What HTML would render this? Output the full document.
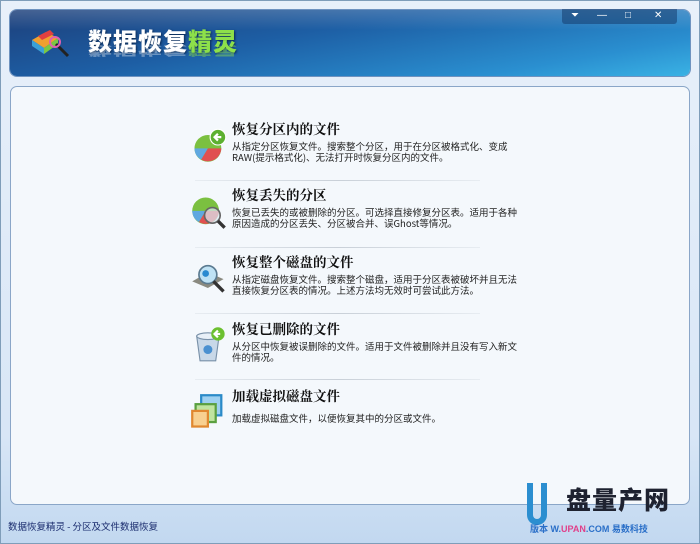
<!DOCTYPE html>
<html><head><meta charset="utf-8"><style>
*{margin:0;padding:0;box-sizing:border-box}
body{width:700px;height:544px;overflow:hidden;background:#cfe0f3;font-family:"Liberation Sans","Noto Sans CJK SC",sans-serif;position:relative}
.frame{position:absolute;left:0;top:0;width:700px;height:544px;border:1px solid #7f9db9;background:linear-gradient(#e8f0fa,#d8e6f6 80%,#c2d8f0)}
.banner{position:absolute;left:10px;top:10px;width:680px;height:66px;border-radius:7px;background:linear-gradient(170deg,#1d3f7a 0%,#1d5ea4 40%,#2a8fd0 80%,#3ab2e4 100%);box-shadow:0 0 0 1px #6f93c0}
.banner .gloss{position:absolute;left:0;top:0;right:0;height:20px;border-radius:7px 7px 0 0;background:linear-gradient(rgba(255,255,255,.18),rgba(255,255,255,0))}
.logo{position:absolute;left:78px;top:12px;font-size:24px;font-weight:900;color:#fff;letter-spacing:1px;text-shadow:1px 1px 2px #0b2850;font-family:"Noto Sans CJK SC",sans-serif}
.logo b{color:#8de04a}
.refl{position:absolute;left:78px;top:50px;font-size:24px;font-weight:900;color:rgba(255,255,255,.35);letter-spacing:1px;transform:scaleY(-.5);transform-origin:top;font-family:"Noto Sans CJK SC",sans-serif;line-height:34px}
.refl b{color:rgba(141,224,74,.45)}
.ctrl{position:absolute;left:562px;top:9px;width:115px;height:15px;background:rgba(20,60,110,.55);border-radius:0 0 3px 3px;color:#fff;font-size:10px}
.ctrl span{position:absolute;top:1px}
.panel{position:absolute;left:10px;top:86px;width:680px;height:419px;border:1px solid #8aa6c8;border-radius:7px;background:#f4f8fc}
.item{position:absolute;left:232px;width:290px}
.item h3{font-size:13.5px;font-weight:bold;color:#111;font-family:"Noto Serif CJK SC","Noto Sans CJK SC",serif;line-height:16px}
.item p{font-size:9.5px;color:#222;line-height:11px;margin-top:5px;font-family:"Noto Sans CJK SC",sans-serif}
.sep{position:absolute;left:195px;width:285px;height:1px;background:linear-gradient(90deg,rgba(180,190,200,.2),#c9d0d8,rgba(180,190,200,.2))}
.ic{position:absolute;left:190px;width:38px;height:38px}
.status{position:absolute;left:8px;top:519px;font-size:9.5px;color:#1a2c6e;font-family:"Noto Sans CJK SC",sans-serif}
.wm{position:absolute;left:566px;top:484px;font-size:25px;font-weight:900;color:#1e2230;font-family:"Noto Sans CJK SC",sans-serif;letter-spacing:1px;line-height:30px}
.u{position:absolute;left:527px;top:483px;width:20px;height:42px;border:6px solid #2b8ed0;border-top:none;border-radius:0 0 10px 10px}
.wm2{position:absolute;left:530px;top:522px;font-size:9px;color:#2a6fc8;font-weight:bold}
.wm2 i{color:#e0408a;font-style:normal}
</style></head><body>
<div class="frame"></div>
<div class="banner"><div class="gloss"></div>
<svg style="position:absolute;left:18px;top:16px" width="44" height="34" viewBox="0 0 44 34"><path d="M4 14 L18 6 L30 12 L16 22Z" fill="#f0a030"/><path d="M4 14 L16 22 L16 28 L4 20Z" fill="#3aa0d8"/><path d="M16 22 L30 12 L30 18 L16 28Z" fill="#7bc843"/><path d="M10 10 L22 4 L26 8 L14 14Z" fill="#e04040"/><line x1="28" y1="18" x2="40" y2="30" stroke="#222" stroke-width="3"/><circle cx="27" cy="16" r="5" fill="none" stroke="#e060b0" stroke-width="2"/></svg>
<div class="logo">数据恢复<b>精灵</b></div>
<div class="refl">数据恢复<b>精灵</b></div>
</div>
<div class="ctrl"><span style="left:9px">⏷</span><span style="left:35px">—</span><span style="left:63px">□</span><span style="left:92px">✕</span></div>
<div class="panel"></div>

<svg class="ic" style="top:126px" viewBox="0 0 34 34"><circle cx="16" cy="20" r="12" fill="#7bc040"/><path d="M16 20 L28 20 A12 12 0 0 1 10 30Z" fill="#e05050"/><path d="M16 20 L10 30 A12 12 0 0 1 4 20Z" fill="#60a8e0"/><circle cx="25" cy="10" r="7" fill="#5cb030" stroke="#fff"/><path d="M28 10 H22 M25 7 L22 10 L25 13" stroke="#fff" stroke-width="2" fill="none"/></svg>
<div class="item" style="top:120px"><h3>恢复分区内的文件</h3><p>从指定分区恢复文件。搜索整个分区，用于在分区被格式化、变成RAW(提示格式化)、无法打开时恢复分区内的文件。</p></div>
<div class="sep" style="top:180px"></div>

<svg class="ic" style="top:193px" viewBox="0 0 34 34"><circle cx="14" cy="16" r="12" fill="#7bc040"/><path d="M14 16 L26 16 A12 12 0 0 1 8 26Z" fill="#e05050"/><path d="M14 16 L8 26 A12 12 0 0 1 2 16Z" fill="#60a8e0"/><circle cx="20" cy="20" r="7" fill="rgba(220,235,245,.7)" stroke="#666" stroke-width="1.5"/><line x1="25" y1="25" x2="31" y2="31" stroke="#333" stroke-width="3"/></svg>
<div class="item" style="top:186px"><h3>恢复丢失的分区</h3><p>恢复已丢失的或被删除的分区。可选择直接修复分区表。适用于各种原因造成的分区丢失、分区被合并、误Ghost等情况。</p></div>
<div class="sep" style="top:247px"></div>

<svg class="ic" style="top:259px" viewBox="0 0 34 34"><path d="M2 20 L16 12 L30 18 L16 26Z" fill="#8a8a80"/><circle cx="16" cy="14" r="8" fill="#bfe2f4" stroke="#5a7a90" stroke-width="1.5"/><circle cx="14" cy="13" r="3" fill="#2a8ad0"/><line x1="21" y1="20" x2="30" y2="29" stroke="#333" stroke-width="3"/></svg>
<div class="item" style="top:253px"><h3>恢复整个磁盘的文件</h3><p>从指定磁盘恢复文件。搜索整个磁盘，适用于分区表被破坏并且无法直接恢复分区表的情况。上述方法均无效时可尝试此方法。</p></div>
<div class="sep" style="top:313px"></div>

<svg class="ic" style="top:325px" viewBox="0 0 34 34"><path d="M6 10 L26 10 L23 32 L9 32Z" fill="#c8d8e8" stroke="#7890a8"/><ellipse cx="16" cy="10" rx="10" ry="3" fill="#e8f0f8" stroke="#7890a8"/><circle cx="16" cy="22" r="4" fill="#4a90d0"/><circle cx="25" cy="8" r="6" fill="#6cc030"/><path d="M27 8 H22 M25 5 L22 8 L25 11" stroke="#fff" stroke-width="2" fill="none"/></svg>
<div class="item" style="top:320px"><h3>恢复已删除的文件</h3><p>从分区中恢复被误删除的文件。适用于文件被删除并且没有写入新文件的情况。</p></div>
<div class="sep" style="top:379px"></div>

<svg class="ic" style="top:393px" viewBox="0 0 34 34"><rect x="10" y="2" width="18" height="18" fill="#9ed0f0" stroke="#2a8ac8" stroke-width="2"/><rect x="5" y="10" width="18" height="16" fill="#c0e4a0" stroke="#5aa040" stroke-width="2"/><rect x="2" y="16" width="14" height="14" fill="#f8d090" stroke="#e08830" stroke-width="2"/></svg>
<div class="item" style="top:387px"><h3>加载虚拟磁盘文件</h3><p style="margin-top:10px">加载虚拟磁盘文件，以便恢复其中的分区或文件。</p></div>

<div class="status">数据恢复精灵 - 分区及文件数据恢复</div>
<div class="u"></div>
<div class="wm">盘量产网</div>
<div class="wm2">版本 W.<i>UPAN</i>.COM 易数科技</div>
</body></html>
